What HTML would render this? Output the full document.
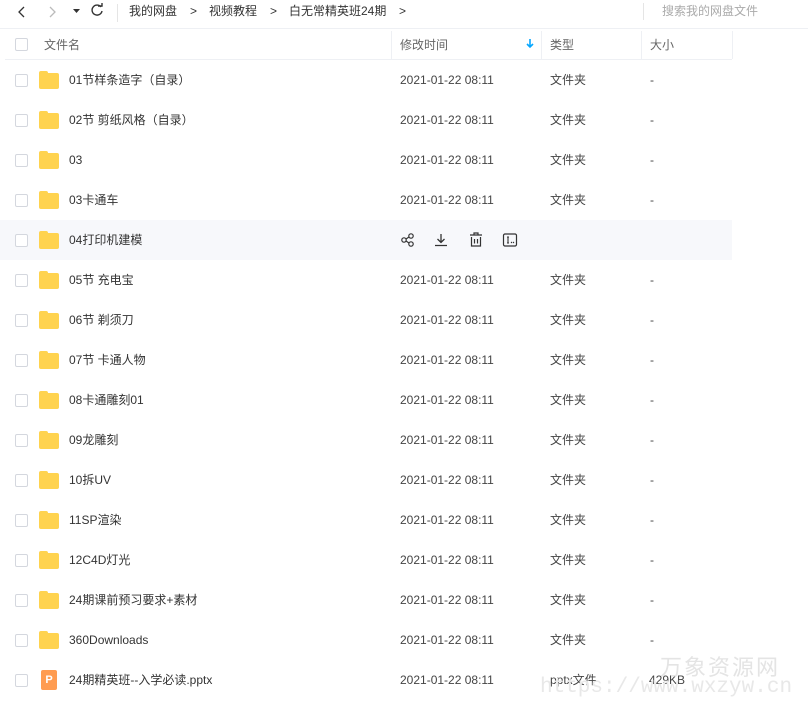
<!DOCTYPE html>
<html><head><meta charset="utf-8"><style>
*{margin:0;padding:0;box-sizing:border-box}
body{width:808px;height:726px;background:#fff;font-family:"Liberation Sans","Noto Sans CJK SC",sans-serif;font-size:12px;color:#444;position:relative;overflow:hidden}
span{line-height:16px}
.top{position:absolute;left:0;top:0;width:808px;height:29px;border-bottom:1px solid #eef0f4}
.t{position:absolute;top:3px;white-space:nowrap;color:#333}
.hdr{position:absolute;left:5px;top:30px;width:727px;height:30px;border-bottom:1px solid #eef0f4}
.sep{position:absolute;top:31px;width:1px;height:28px;background:#eef0f4}
.row{position:absolute;left:0;width:732px;height:40px}
.cb{position:absolute;left:15px;width:13px;height:13px;border:1px solid #d4d7de;border-radius:2px;background:#fff}
.fd{position:absolute;left:39px;width:20px;height:16px;background:#ffd34f;border-radius:2px}
.fd:before{content:"";position:absolute;left:0;top:-2px;width:9px;height:4px;background:#ffd34f;border-radius:2px 2px 0 0}
.c{position:absolute;white-space:nowrap}
</style></head><body>
<div class="row" style="top:220px;background:#f7f8fb"></div>
<div class="top">
<svg style="position:absolute;left:16px;top:5px" width="12" height="14"><path d="M8 2 L3 7 L8 12" stroke="#333" stroke-width="1.3" fill="none"/></svg>
<svg style="position:absolute;left:46px;top:5px" width="12" height="14"><path d="M4 2 L9 7 L4 12" stroke="#bbb" stroke-width="1.3" fill="none"/></svg>
<svg style="position:absolute;left:73px;top:8px" width="8" height="6"><path d="M0 1 L7 1 L3.5 5Z" fill="#333"/></svg>
<svg style="position:absolute;left:90px;top:3px" width="14" height="14"><path d="M11 4 A5 5 0 1 0 12 8" stroke="#333" stroke-width="1.4" fill="none"/><path d="M8 3 L12 3 L12 0" stroke="#333" stroke-width="1.4" fill="none"/></svg>
<div style="position:absolute;left:117px;top:4px;width:1px;height:18px;background:#e5e5e5"></div>
<span class="t" style="left:129px">我的网盘</span>
<span class="t" style="left:190px">&gt;</span>
<span class="t" style="left:209px">视频教程</span>
<span class="t" style="left:270px">&gt;</span>
<span class="t" style="left:289px">白无常精英班24期</span>
<span class="t" style="left:399px">&gt;</span>
<div style="position:absolute;left:643px;top:3px;width:1px;height:17px;background:#e5e5e5"></div>
<span class="t" style="left:662px;color:#aaa">搜索我的网盘文件</span>
</div>
<div class="hdr"></div>
<div class="cb" style="top:38px"></div>
<span class="c" style="left:44px;top:37px;color:#666">文件名</span>
<div class="sep" style="left:391px"></div>
<span class="c" style="left:400px;top:37px;color:#666">修改时间</span>
<svg style="position:absolute;left:526px;top:39px" width="8" height="10"><path d="M4 0 V8 M1 5 L4 8 L7 5" stroke="#06a7ff" stroke-width="1.6" fill="none"/></svg>
<div class="sep" style="left:541px"></div>
<span class="c" style="left:550px;top:37px;color:#666">类型</span>
<div class="sep" style="left:641px"></div>
<span class="c" style="left:650px;top:37px;color:#666">大小</span>
<div class="sep" style="left:732px"></div>
<div id="rows"></div>
<script>
var n=["01节样条造字（自录）","02节 剪纸风格（自录）","03","03卡通车","04打印机建模","05节 充电宝","06节 剃须刀","07节 卡通人物","08卡通雕刻01","09龙雕刻","10拆UV","11SP渲染","12C4D灯光","24期课前预习要求+素材","360Downloads","24期精英班--入学必读.pptx"];
var h="";
n.forEach(function(s,i){var y=80+i*40;var last=i==15;
h+='<div class="cb" style="top:'+(y-6)+'px"></div>';
if(last)h+='<div style="position:absolute;left:41px;top:'+(y-10)+'px;width:16px;height:20px;background:#ff9c51;border-radius:2px;color:#fff;font-size:11px;font-weight:bold;text-align:center;line-height:20px">P</div>';
else h+='<div class="fd" style="top:'+(y-7)+'px"></div>';
h+='<span class="c" style="left:69px;top:'+(y-8)+'px;color:#333">'+s+'</span>';
if(i!=4){h+='<span class="c" style="left:400px;top:'+(y-8)+'px">2021-01-22 08:11</span>';
h+='<span class="c" style="left:550px;top:'+(y-8)+'px">'+(last?'pptx文件':'文件夹')+'</span>';
h+='<span class="c" style="left:'+(last?649:650)+'px;top:'+(y-8)+'px">'+(last?'429KB':'-')+'</span>';}
});
document.getElementById("rows").innerHTML=h;
</script>
<svg style="position:absolute;left:400px;top:232px" width="16" height="16"><circle cx="4" cy="8" r="2.2" stroke="#333" fill="none" stroke-width="1.2"/><circle cx="11" cy="4" r="2.2" stroke="#333" fill="none" stroke-width="1.2"/><circle cx="11" cy="12" r="2.2" stroke="#333" fill="none" stroke-width="1.2"/><path d="M6 7 L9 5 M6 9 L9 11" stroke="#333" stroke-width="1.2"/></svg>
<svg style="position:absolute;left:433px;top:232px" width="16" height="16"><path d="M8 2 V10 M4.5 7 L8 10.5 L11.5 7 M2 13.5 H14" stroke="#333" stroke-width="1.3" fill="none"/></svg>
<svg style="position:absolute;left:468px;top:231px" width="16" height="17"><path d="M2 4 H14 M6 4 V2 H10 V4 M3.5 6 V15 H12.5 V6 M6.5 8 V12.5 M9.5 8 V12.5" stroke="#333" stroke-width="1.2" fill="none"/></svg>
<svg style="position:absolute;left:502px;top:232px" width="16" height="16"><rect x="1.5" y="2" width="13" height="12" rx="1.5" stroke="#333" stroke-width="1.2" fill="none"/><path d="M5 5 H7 M6 5 V11 M5 11 H7" stroke="#333" stroke-width="1.1"/><circle cx="9.5" cy="10.5" r=".7" fill="#333"/><circle cx="11.5" cy="10.5" r=".7" fill="#333"/></svg>
<div style="position:absolute;left:660px;top:650px;font-size:22px;color:#e4e4e4;letter-spacing:2px">万象资源网</div>
<div style="position:absolute;left:540px;top:676px;font-family:'Liberation Mono',monospace;font-size:21px;color:#e8e8e8">https://www.wxzyw.cn</div>
</body></html>
